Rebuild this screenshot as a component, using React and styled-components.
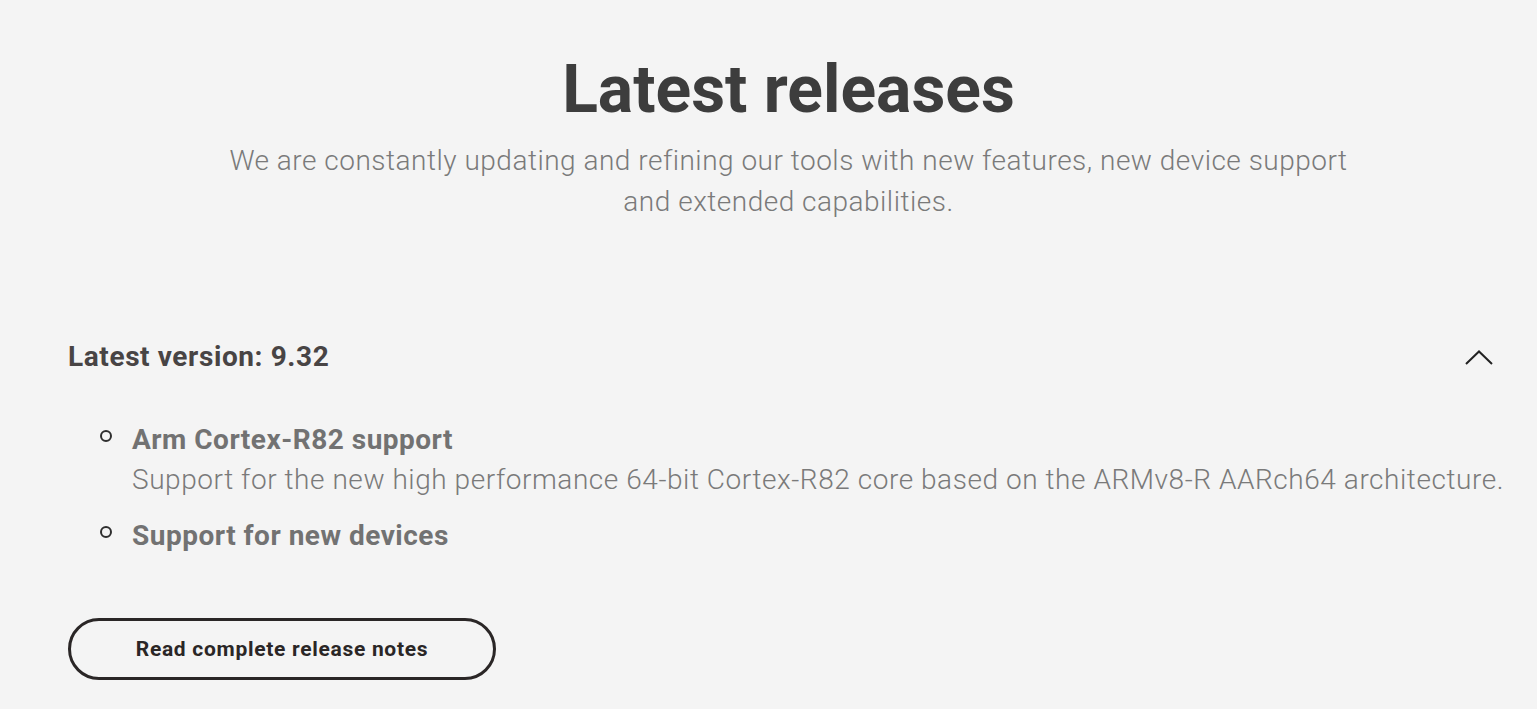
import styled, { createGlobalStyle } from 'styled-components'

const GlobalStyle = createGlobalStyle`
  html, body {
    margin: 0;
    background: #f4f4f4;
    font-family: Roboto, "Liberation Sans", sans-serif;
  }
`

// layout
const Page = styled.main`
  padding: 52px 28px 0 68px;
  background: #f4f4f4;
  min-height: 709px;
  box-sizing: border-box;
`
const Intro = styled.header`
  text-align: center;
  margin-bottom: 120px;
`
const Title = styled.h1`
  margin: 0;
  font-size: 66px;
  line-height: 76px;
  font-weight: 700;
  color: #3d3d3d;
`
const Lead = styled.p`
  margin: 12px auto 0;
  max-width: 1160px;
  font-size: 28px;
  line-height: 41px;
  font-weight: 300;
  letter-spacing: 0.5px;
  color: #7a7a7a;
`

// release accordion
const Release = styled.section``
const ReleaseHead = styled.div`
  display: flex;
  align-items: center;
  justify-content: space-between;
  padding-right: 16px;
`
const Version = styled.h2`
  margin: 0;
  font-size: 28px;
  line-height: 30px;
  font-weight: 700;
  letter-spacing: 0.6px;
  color: #484444;
`
const Toggle = styled.button`
  border: none;
  background: none;
  padding: 0;
  display: flex;
  cursor: pointer;
`
const Features = styled.ul`
  list-style: none;
  margin: 48px 0 0;
  padding: 0 0 0 30px;
  display: flex;
  flex-direction: column;
  gap: 16px;
`
const Feature = styled.li`
  display: grid;
  grid-template-columns: 34px 1fr;
  align-items: start;
`
const Bullet = styled.span`
  width: 12px;
  height: 12px;
  box-sizing: border-box;
  margin: 10px 0 0 2px;
  border: 2px solid #2e2e2e;
  border-radius: 50%;
`
const FeatureTitle = styled.div`
  font-size: 28px;
  line-height: 40px;
  font-weight: 700;
  letter-spacing: 0.5px;
  color: #727272;
`
const FeatureText = styled.div`
  font-size: 28px;
  line-height: 40px;
  font-weight: 300;
  letter-spacing: 0.55px;
  color: #7a7a7a;
  grid-column: 2;
`
const NotesButton = styled.a`
  display: inline-flex;
  align-items: center;
  justify-content: center;
  margin-top: 62px;
  width: 428px;
  height: 62px;
  box-sizing: border-box;
  border: 3px solid #2a2626;
  border-radius: 31px;
  font-size: 21px;
  font-weight: 700;
  letter-spacing: 0.7px;
  color: #2a2626;
  text-decoration: none;
`

const Chevron = () => (
  <svg width="28" height="15" viewBox="0 0 28 15" fill="none">
    <path d="M1 14 L14 1.5 L27 14" stroke="#222" strokeWidth="2" />
  </svg>
)

export default function App() {
  return (
    <>
      <GlobalStyle />
      <Page>
        <Intro>
          <Title>Latest releases</Title>
          <Lead>
            We are constantly updating and refining our tools with new features, new device support
            and extended capabilities.
          </Lead>
        </Intro>
        <Release>
          <ReleaseHead>
            <Version>Latest version: 9.32</Version>
            <Toggle aria-label="Collapse"><Chevron /></Toggle>
          </ReleaseHead>
          <Features>
            <Feature>
              <Bullet />
              <FeatureTitle>Arm Cortex-R82 support</FeatureTitle>
              <FeatureText>
                Support for the new high performance 64-bit Cortex-R82 core based on the ARMv8-R AARch64 architecture.
              </FeatureText>
            </Feature>
            <Feature>
              <Bullet />
              <FeatureTitle>Support for new devices</FeatureTitle>
            </Feature>
          </Features>
          <NotesButton href="#">Read complete release notes</NotesButton>
        </Release>
      </Page>
    </>
  )
}
